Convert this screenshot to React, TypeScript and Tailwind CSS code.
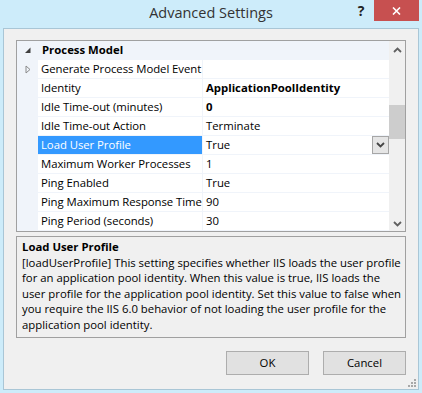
const rows = [
  { name: "Generate Process Model Event", value: "", expandable: true },
  { name: "Identity", value: "ApplicationPoolIdentity", bold: true },
  { name: "Idle Time-out (minutes)", value: "0", bold: true },
  { name: "Idle Time-out Action", value: "Terminate" },
  { name: "Load User Profile", value: "True", selected: true },
  { name: "Maximum Worker Processes", value: "1" },
  { name: "Ping Enabled", value: "True" },
  { name: "Ping Maximum Response Time (seconds)", value: "90" },
  { name: "Ping Period (seconds)", value: "30" },
];

const Chevron = ({ up, color = "#606060" }: { up?: boolean; color?: string }) => (
  <svg width="9" height="6" viewBox="0 0 9 6">
    <path
      d={up ? "M1 5 L4.5 1.5 L8 5" : "M1 1 L4.5 4.5 L8 1"}
      stroke={color}
      strokeWidth="1.8"
      fill="none"
    />
  </svg>
);

const App = () => (
  <div className="w-[422px] h-[393px] bg-[#cdecfa] px-[3px] pb-[3px] flex flex-col font-['Open_Sans',sans-serif] text-[11.35px] text-black">
    {/* Title bar */}
    <div className="h-[28px] shrink-0 grid grid-cols-[1fr_auto_1fr]">
      <div />
      <div className="text-[14.5px] leading-[20px] pt-[3px] text-[#333]">Advanced Settings</div>
      <div className="flex justify-end items-start">
        <span className="w-[26px] text-center font-bold text-[14px] leading-[20px] pt-[1px] text-[#222]">?</span>
        <div className="w-[45px] h-[21px] bg-[#c75050] flex items-center justify-center">
          <svg width="9" height="8" viewBox="0 0 9 8">
            <path d="M1 0.5 L8 7.5 M8 0.5 L1 7.5" stroke="white" strokeWidth="1.6" />
          </svg>
        </div>
      </div>
    </div>

    {/* Dialog body */}
    <div className="flex-1 relative bg-[#f0f0f0] border border-[#a9c6d6] px-[12px] pt-[11px] pb-[14px] flex flex-col">
      {/* Property grid */}
      <div className="h-[192px] border border-[#a0a0a0] flex">
        <div className="flex-1 bg-[#f0f4fa] flex flex-col gap-px">
          <div className="h-[18px] flex items-center">
            <div className="w-[21px] flex justify-center">
              <svg width="7" height="7" viewBox="0 0 7 7">
                <path d="M6.5 0.5 L6.5 6 L1 6 Z" fill="#404040" />
              </svg>
            </div>
            <span className="pl-[4px] font-bold">Process Model</span>
          </div>
          {rows.map((r) => (
            <div key={r.name} className="h-[18px] flex">
              <div className="w-[21px] flex items-center justify-center">
                {r.expandable && (
                  <svg width="6" height="9" viewBox="0 0 6 9">
                    <path d="M1 1 L5 4.5 L1 8 Z" stroke="#8a8a8a" fill="none" />
                  </svg>
                )}
              </div>
              <div
                className={`w-[164px] pl-[3px] tracking-[-0.05px] flex items-center overflow-hidden whitespace-nowrap ${
                  r.selected ? "bg-[#3399ff] text-white" : "bg-white"
                }`}
              >
                {r.name}
              </div>
              <div className="ml-px flex-1 bg-white pl-[3px] flex items-center">
                <span className={`flex-1 ${r.bold ? "font-bold" : ""}`}>{r.value}</span>
                {r.selected && (
                  <div className="w-[17px] h-[18px] border border-[#a6a6a6] bg-[#e5e5e5] flex items-center justify-center">
                    <Chevron color="#444" />
                  </div>
                )}
              </div>
            </div>
          ))}
        </div>

        {/* Scrollbar */}
        <div className="w-[16px] bg-[#f0f0f0] flex flex-col">
          <div className="h-[17px] flex items-center justify-center">
            <Chevron up />
          </div>
          <div className="flex-1">
            <div className="mt-[47px] h-[34px] bg-[#cdcdcd]" />
          </div>
          <div className="h-[17px] flex items-center justify-center pt-[2px]">
            <Chevron />
          </div>
        </div>
      </div>

      {/* Description */}
      <div className="mt-[4px] h-[102px] border border-[#a0a0a0] pl-[5px] pr-[4px] pt-[2px]">
        <div className="font-bold leading-[15px] mb-[1px]">Load User Profile</div>
        <p className="leading-[15.4px]">
          [loadUserProfile] This setting specifies whether IIS loads the user profile for an
          application pool identity. When this value is true, IIS loads the user profile for the
          application pool identity. Set this value to false when you require the IIS 6.0 behavior
          of not loading the user profile for the application pool identity.
        </p>
      </div>

      {/* Buttons */}
      <div className="mt-[13px] flex justify-end gap-[14px]">
        <button className="w-[83px] h-[24px] border border-[#adadad] bg-[#e1e1e1]">OK</button>
        <button className="w-[83px] h-[24px] border border-[#adadad] bg-[#e1e1e1]">Cancel</button>
      </div>

      {/* Resize grip */}
      <svg className="absolute right-[2px] bottom-[2px]" width="8" height="8" viewBox="0 0 8 8" fill="#a8a8a8">
        <rect x="6" y="0" width="2" height="2" />
        <rect x="3" y="3" width="2" height="2" />
        <rect x="6" y="3" width="2" height="2" />
        <rect x="0" y="6" width="2" height="2" />
        <rect x="3" y="6" width="2" height="2" />
        <rect x="6" y="6" width="2" height="2" />
      </svg>
    </div>
  </div>
);

export default App;
